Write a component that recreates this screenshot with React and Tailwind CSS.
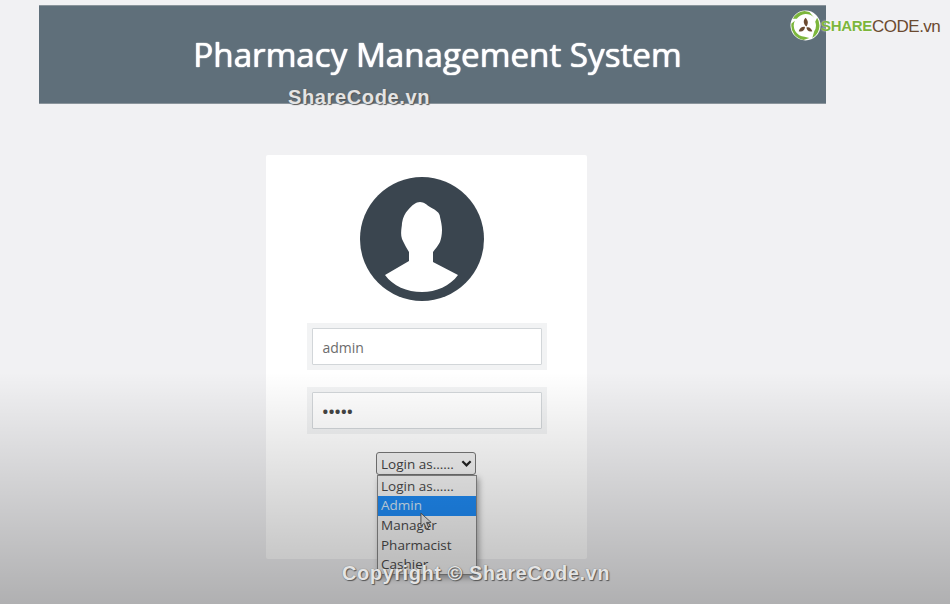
import React from "react";

const openSans = "font-['Open_Sans',sans-serif]";

function Avatar() {
  return (
    <svg viewBox="0 0 124 124" className="w-[124px] h-[124px] block">
      <circle cx="62" cy="62" r="62" fill="#3a454f" />
      <path
        d="M60 25 C64 25 67 28 70 30 C76 33 80 36 80 40 C81 44 82 49 82 53 C82 58 81 62 80 65 C78 69 75 72 73 75 L73 85 L98 98 C90 109 76 115 62 115 C47 115 33 109 25 98 L49 84 L49 75 C47 72 45 68 42 62 C40 56 42 50 42 46 C43 40 45 36 48 33 C52 28 56 25 60 25 Z"
        fill="#ffffff"
      />
    </svg>
  );
}

function Logo() {
  return (
    <svg viewBox="0 0 32 32" className="w-[31px] h-[31px] block">
      <circle cx="16" cy="16" r="15.500" fill="#fff" />
      <path d="M15 1 L20 2 L25 8 A11.500 11.500 0 0 0 7 9 L3 9 A15 15 0 0 1 15 1 Z" fill="#7cb63c" />
      <path d="M1.500 14 L5 11 A11.500 11.500 0 0 0 15 27.500 L20 29 L14 31 A15 15 0 0 1 1.500 14 Z" fill="#7cb63c" />
      <path d="M28 8 A15 15 0 0 1 23 29 L25 22 A11 11 0 0 0 26 12 Z" fill="#7cb63c" />
      <path d="M16 8 C19 11 19 14 17 17 C14 15 13 11 16 8 Z" fill="#6b4a30" />
      <path d="M9 22 C10 18 13 17 15.500 17.500 C15 21 13 23 9 22 Z" fill="#6b4a30" />
      <path d="M23 22 C19 23 17 20 17 18 C20 17 22 19 23 22 Z" fill="#6b4a30" />
    </svg>
  );
}

function Field({ children }) {
  return (
    <div className="w-[240px] h-[47px] p-[5px] bg-[#f2f3f4]">
      <div className={`h-[37px] bg-white border border-[#d2d6d9] rounded-[1px] pl-[10px] pt-[2px] flex items-center ${openSans}`}>
        {children}
      </div>
    </div>
  );
}

export default function App() {
  const outline = "[text-shadow:1px_1px_1px_#555,0_0_1px_#666]";
  return (
    <div className="relative w-[950px] h-[604px] overflow-hidden bg-[#f1f1f3]">
      <div className="pt-[5px] pl-[39px]">
        <header className="w-[787px] h-[99px] bg-[#5f6f7a] border-t border-b border-[#8a949b] flex justify-center pt-[27px]">
          <h1 className={`ml-[10px] text-[33.200px] leading-[44px] font-normal text-white whitespace-nowrap ${openSans} [text-shadow:0_0_1px_#fff,0_0_1px_#fff]`}>
            Pharmacy Management System
          </h1>
        </header>
      </div>

      <main className="pt-[51px] pl-[266px]">
        <div className="w-[321px] h-[404px] bg-white rounded-[2px] pt-[22px] flex flex-col items-center">
          <div className="mr-[9px]"><Avatar /></div>
          <div className="mt-[22px]">
            <Field><span className="text-[14px] text-[#6c6c6c]">admin</span></Field>
          </div>
          <div className="mt-[17px]">
            <Field><span className="text-[15px] leading-none tracking-[0.5px] font-bold text-[#444]">•••••</span></Field>
          </div>
          <div className={`mt-[18px] mr-[1px] w-[100px] h-[23px] border border-[#777] rounded-[3px] bg-[#f4f4f4] pl-[4px] pr-[3px] pt-[2px] flex items-center justify-between text-[13.500px] text-[#444] ${openSans}`}>
            <span>Login as......</span>
            <svg viewBox="0 0 12 12" className="w-[11px] h-[11px] -mt-[2px]">
              <path d="M1.500 3.500 L6 8 L10.500 3.500" fill="none" stroke="#222" strokeWidth="2.400" />
            </svg>
          </div>
        </div>
      </main>

      {/* dropdown list */}
      <div className={`absolute left-[377px] top-[475px] w-[100px] h-[100px] bg-[#f4f4f4] border border-[#888] shadow-[2px_3px_6px_rgba(0,0,0,0.35)] text-[13.500px] text-[#4a4a4a] ${openSans}`}>
        <div className="h-[20px] pl-[3px] leading-[20px]">Login as......</div>
        <div className="h-[20px] pl-[3px] leading-[19px] bg-[#1f8bf5] text-[#d5e8f8]">Admin</div>
        <div className="h-[20px] pl-[3px] leading-[19px]">Manager</div>
        <div className="h-[19px] pl-[3px] leading-[18px]">Pharmacist</div>
        <div className="h-[19px] pl-[3px] leading-[19px]">Cashier</div>
      </div>

      {/* cursor */}
      <svg viewBox="0 0 14 20" className="absolute left-[420px] top-[512px] w-[13px] h-[19px]">
        <path d="M1 1 L1 15 L4.500 12 L7 18 L9.500 17 L7 11 L12 11 Z" fill="#e8e8e8" stroke="#555" strokeWidth="1" />
      </svg>

      {/* fade over the lower part of the page */}
      <div className="absolute left-0 right-0 top-[372px] bottom-0 bg-gradient-to-b from-transparent to-[rgba(0,0,0,0.27)] pointer-events-none" />

      {/* watermarks */}
      <div className={`absolute left-[288px] top-[85px] text-[20px] leading-[24px] font-bold text-[#e4e4e4] font-['Liberation_Sans',sans-serif] whitespace-nowrap tracking-[0.63px] ${outline}`}>
        ShareCode.vn
      </div>
      <div className={`absolute left-[342px] top-[561px] text-[20px] leading-[24px] font-bold text-[#e4e4e4] font-['Liberation_Sans',sans-serif] whitespace-nowrap tracking-[0.55px] ${outline}`}>
        Copyright © ShareCode.vn
      </div>

      {/* logo */}
      <div className="absolute left-[790px] top-[10px] flex items-center h-[31px]">
        <Logo />
        <span className="mt-[2px] text-[15px] font-['Liberation_Sans',sans-serif] font-bold text-[#7cb63c] tracking-[-0.3px] [text-shadow:0_0_2px_#fff]">SHARE</span>
        <span className="mt-[2px] text-[17px] font-['Liberation_Sans',sans-serif] text-[#6b4a30] tracking-[-0.5px]">CODE.vn</span>
      </div>
    </div>
  );
}
